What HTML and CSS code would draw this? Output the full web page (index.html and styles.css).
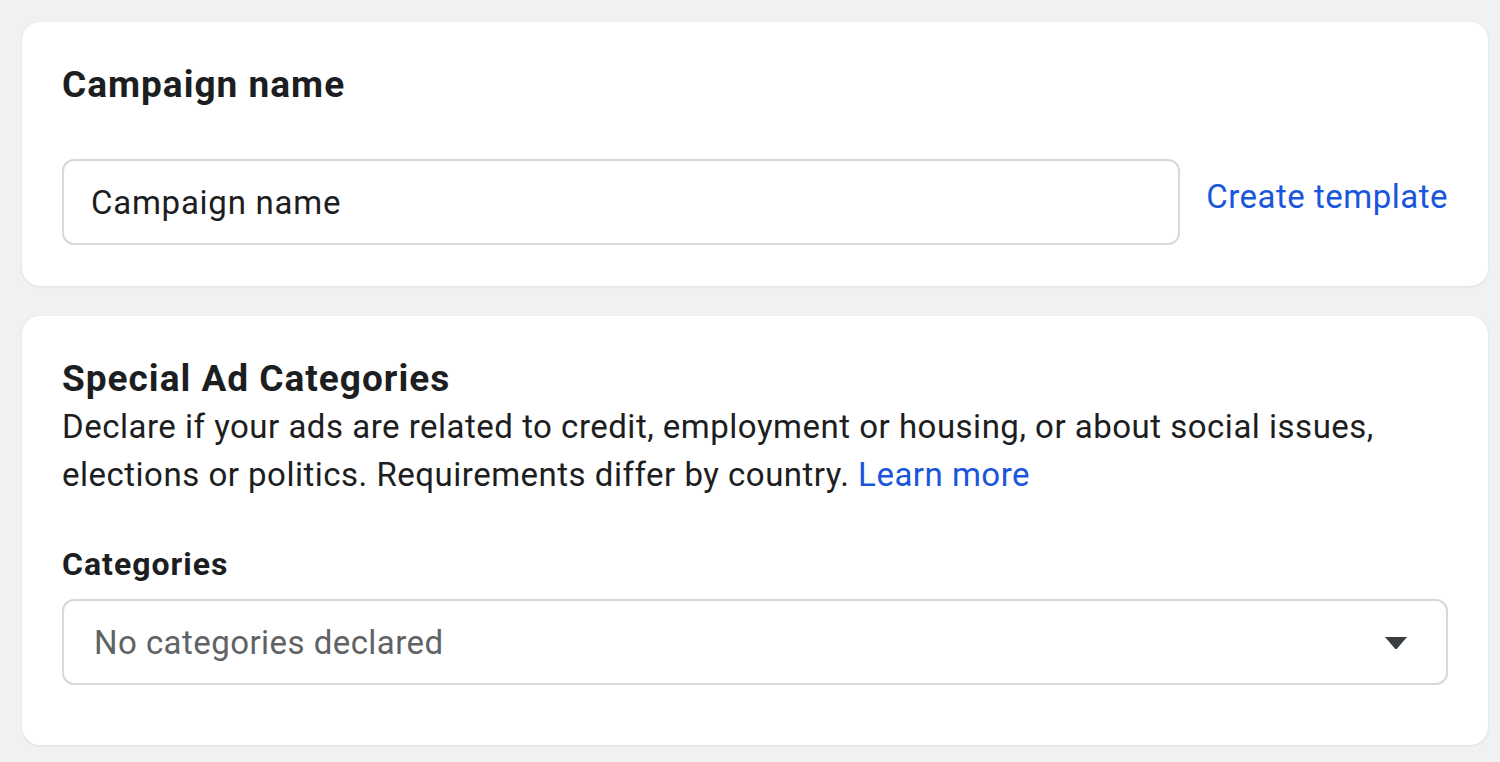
FILE: index.html
```html
<!DOCTYPE html>
<html lang="en">
<head>
<meta charset="utf-8">
<title>Campaign</title>
<link rel="stylesheet" href="styles.css">
</head>
<body>
<main class="page">
  <section class="card card-name">
    <h2 class="card-title">Campaign name</h2>
    <div class="name-row">
      <div class="text-input">Campaign name</div>
      <a class="link template-link" href="#">Create template</a>
    </div>
  </section>
  <section class="card card-special">
    <h2 class="card-title">Special Ad Categories</h2>
    <p class="desc">Declare if your ads are related to credit, employment or housing, or about social issues, elections or politics. Requirements differ by country. <a class="link" href="#">Learn more</a></p>
    <div class="field-label">Categories</div>
    <div class="select">
      <span class="placeholder">No categories declared</span>
      <svg class="caret" width="24" height="14" viewBox="0 0 24 14" aria-hidden="true"><path d="M1 1 H23 L13.2 12.4 Q12 13.6 10.8 12.4 Z" fill="#3a3d42"/></svg>
    </div>
  </section>
</main>
</body>
</html>
```
FILE: styles.css
```css
* { box-sizing: border-box; }
html, body { margin: 0; padding: 0; }
body {
  background: #f0f1f2;
  font-family: Roboto, "Liberation Sans", Arial, sans-serif;
  color: #1c1e21;
  width: 1500px;
  height: 762px;
  overflow: hidden;
}
.page {
  padding: 22px 12px 0 22px;
  display: flex;
  flex-direction: column;
  gap: 30px;
}
.card {
  background: #fff;
  border-radius: 18px;
  box-shadow: 0 1px 3px rgba(0,0,0,0.08), 0 0 1px rgba(0,0,0,0.06);
  padding: 41px 40px 41px 40px;
}
.card-special { padding-bottom: 60px; }
.card-title {
  margin: 0;
  font-size: 37px;
  line-height: 44px;
  font-weight: 700;
  letter-spacing: 1px;
  color: #1c1e21;
}
.name-row {
  margin-top: 52px;
  display: flex;
  align-items: center;
  gap: 26px;
}
.text-input {
  flex: 1;
  height: 86px;
  border: 2px solid #d6d8db;
  border-radius: 12px;
  padding: 0 27px;
  display: flex;
  align-items: center;
  font-size: 33px;
  letter-spacing: 0.75px;
  color: #1c1e21;
}
.link {
  color: #1a56db;
  text-decoration: none;
}
.template-link {
  font-size: 33px;
  letter-spacing: 0.5px;
  line-height: 40px;
  margin-bottom: 11px;
  white-space: nowrap;
}
.desc {
  margin: 2px 0 0;
  font-size: 33px;
  letter-spacing: 0.5px;
  line-height: 48px;
  color: #1c1e21;
}
.field-label {
  margin-top: 46px;
  font-size: 32px;
  line-height: 38px;
  letter-spacing: 1px;
  font-weight: 700;
}
.select {
  margin-top: 16px;
  height: 86px;
  border: 2px solid #d6d8db;
  border-radius: 12px;
  padding: 0 38px 0 30px;
  display: flex;
  align-items: center;
  justify-content: space-between;
}
.placeholder {
  font-size: 33px;
  letter-spacing: 0.45px;
  color: #606366;
}
.caret { display: block; margin-top: 2px; }
```
